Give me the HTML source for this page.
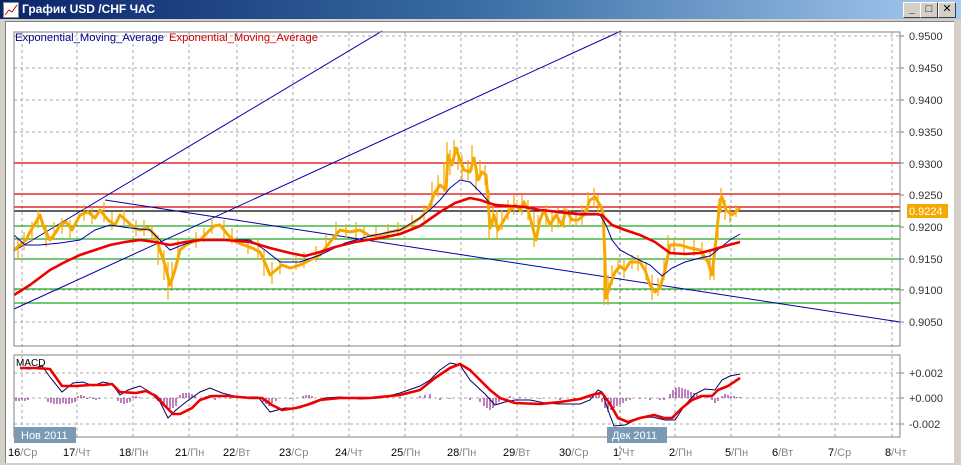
<!DOCTYPE html>
<html><head><meta charset="utf-8"><style>
html,body{margin:0;padding:0;width:961px;height:465px;overflow:hidden;background:#d4d0c8;font-family:"Liberation Sans","DejaVu Sans",sans-serif}
.title{position:absolute;left:0;top:0;width:961px;height:19px;background:linear-gradient(90deg,#0a246a 0%,#3a6ea5 50%,#a6caf0 100%);}
.title span{position:absolute;left:22px;top:2px;color:#fff;font-weight:bold;font-size:12px;font-family:"Liberation Sans","DejaVu Sans",sans-serif}
.ico{position:absolute;left:3px;top:2px;width:14px;height:14px;background:#fff;border:1px solid #888}
.btn{position:absolute;top:2px;width:16px;height:14px;background:#d4d0c8;border:1px solid;border-color:#fff #404040 #404040 #fff;font-size:11px;line-height:13px;text-align:center;font-weight:bold}
.body{position:absolute;left:5px;top:21px;width:948px;height:441px;background:#fff;border-left:1px solid #808080;border-top:1px solid #808080}
svg{position:absolute;left:0;top:0}
</style></head><body>
<div class="title"><div class="ico"><svg width="14" height="14"><polyline points="1,12 5,7 8,9 13,2" fill="none" stroke="#c00" stroke-width="1"/></svg></div><span>График USD /CHF ЧАС</span></div>
<div class="btn" style="left:903px">_</div><div class="btn" style="left:920px">□</div><div class="btn" style="left:938px">✕</div>
<div class="body"></div>
<svg width="961" height="465" font-family="Liberation Sans, DejaVu Sans, sans-serif">
<g stroke="#aaa" stroke-dasharray="3,3" stroke-width="1">
<line x1="22" y1="32" x2="22" y2="437"/><line x1="77" y1="32" x2="77" y2="437"/><line x1="133" y1="32" x2="133" y2="437"/><line x1="189" y1="32" x2="189" y2="437"/><line x1="237" y1="32" x2="237" y2="437"/><line x1="293" y1="32" x2="293" y2="437"/><line x1="349" y1="32" x2="349" y2="437"/><line x1="405" y1="32" x2="405" y2="437"/><line x1="461" y1="32" x2="461" y2="437"/><line x1="517" y1="32" x2="517" y2="437"/><line x1="573" y1="32" x2="573" y2="437"/><line x1="675" y1="32" x2="675" y2="437"/><line x1="731" y1="32" x2="731" y2="437"/><line x1="779" y1="32" x2="779" y2="437"/><line x1="835" y1="32" x2="835" y2="437"/><line x1="892" y1="32" x2="892" y2="437"/>
<line x1="14" y1="36" x2="900" y2="36"/><line x1="14" y1="68" x2="900" y2="68"/><line x1="14" y1="100" x2="900" y2="100"/><line x1="14" y1="132" x2="900" y2="132"/><line x1="14" y1="290" x2="900" y2="290"/><line x1="14" y1="322" x2="900" y2="322"/>
<line x1="14" y1="373" x2="900" y2="373"/><line x1="14" y1="398" x2="900" y2="398"/><line x1="14" y1="424" x2="900" y2="424"/>
</g>
<line x1="620" y1="32" x2="620" y2="460" stroke="#777" stroke-dasharray="3,3"/>
<g stroke-width="1.2">
<line x1="14" y1="163" x2="900" y2="163" stroke="#d00"/><line x1="14" y1="194" x2="900" y2="194" stroke="#d00"/><line x1="14" y1="207" x2="900" y2="207" stroke="#d00"/>
<line x1="14" y1="211" x2="900" y2="211" stroke="#000"/>
<line x1="14" y1="226" x2="900" y2="226" stroke="#2a2"/><line x1="14" y1="239" x2="900" y2="239" stroke="#2a2"/><line x1="14" y1="259" x2="900" y2="259" stroke="#2a2"/><line x1="14" y1="289" x2="900" y2="289" stroke="#2a2"/><line x1="14" y1="303" x2="900" y2="303" stroke="#2a2"/>
</g>
<g stroke="#00a" stroke-width="1"><line x1="14" y1="251" x2="382" y2="31"/><line x1="14" y1="309" x2="621" y2="31"/><line x1="105" y1="200" x2="900" y2="322"/></g>
<polyline fill="none" stroke="#f5a800" stroke-width="3" stroke-linejoin="round" points="14,250 20,245 26,240 30,232 36,222 40,215 44,228 50,240 56,232 60,225 66,222 72,230 80,215 88,212 95,218 100,210 108,220 115,225 120,215 128,222 134,228 140,230 148,228 155,235 160,250 165,265 170,285 175,270 180,250 186,245 192,242 200,240 208,232 214,226 220,225 228,235 236,242 244,245 252,248 260,252 266,265 270,275 276,270 282,265 290,268 300,265 310,260 320,255 330,242 340,230 350,232 360,230 370,236 380,235 390,232 400,230 410,225 420,218 426,212 430,205 435,192 440,185 446,190 448,155 452,165 456,148 460,160 464,170 470,172 474,158 478,180 482,172 486,175 488,200 490,228 494,215 498,230 504,220 510,210 516,205 520,210 524,202 528,210 532,225 536,240 540,220 544,210 550,225 556,215 562,225 566,210 572,220 578,220 584,215 590,200 595,197 600,205 603,212 605,260 606,298 610,285 615,272 620,266 625,270 630,262 640,262 645,270 650,285 655,292 660,288 665,270 670,245 680,245 690,248 700,250 708,262 712,275 716,240 720,200 722,197 726,210 732,215 740,208"/>
<path fill="none" stroke="#f5a800" stroke-width="1.2" d="M18 238v22M24 232v18M32 222v20M38 210v18M46 225v22M54 222v18M62 218v16M70 220v18M84 205v16M92 208v16M104 202v20M112 212v18M124 210v18M136 220v16M144 220v16M152 225v18M158 235v30M164 250v30M168 262v38M172 262v26M178 240v20M196 232v16M204 228v14M212 218v16M224 220v18M232 228v16M248 238v16M258 240v20M264 250v26M272 262v22M280 258v16M296 256v14M304 252v16M316 246v16M326 235v14M336 222v16M346 224v14M356 222v16M364 226v14M376 226v16M388 224v14M398 222v14M412 215v16M424 205v16M432 182v26M438 175v22M444 162v30M447 142v28M450 150v25M454 140v20M458 148v22M462 155v25M468 160v20M472 145v25M476 165v25M480 160v20M485 165v20M489 190v50M493 205v20M497 210v30M502 210v20M508 200v20M514 195v20M522 195v20M528 200v20M534 212v35M538 215v20M546 205v20M552 212v20M558 208v20M564 208v20M570 210v16M576 212v14M582 205v20M588 192v20M594 188v20M598 195v20M604 215v90M608 275v30M612 265v20M618 258v16M624 260v18M632 255v14M638 255v16M646 262v18M652 275v25M658 278v18M664 260v20M668 235v25M674 238v16M684 238v16M694 240v16M702 242v18M710 250v30M714 250v30M718 205v35M721 188v25M725 200v20M730 205v18M736 205v12"/>
<polyline fill="none" stroke="#00a" stroke-width="1" points="14,235 25,245 40,245 60,243 80,240 95,230 110,225 130,228 150,230 160,240 170,250 185,244 200,240 225,240 250,240 265,250 280,262 300,262 320,255 345,243 370,236 400,230 420,218 432,208 440,200 450,188 460,180 470,182 480,192 490,203 500,205 520,207 540,210 560,213 580,215 600,215 606,225 612,240 620,250 635,258 650,265 662,276 672,268 685,262 700,258 710,256 720,248 730,240 740,234"/>
<polyline fill="none" stroke="#e00" stroke-width="2.6" stroke-linejoin="round" points="14,295 30,285 50,270 65,262 80,255 95,250 110,245 125,242 140,240 155,242 170,245 185,242 200,240 225,240 250,242 270,248 290,253 305,256 320,252 335,247 355,242 380,238 400,234 420,226 440,212 455,203 470,198 480,200 495,205 510,206 525,207 540,210 560,212 580,214 595,214 602,215 612,225 625,230 640,235 655,242 670,253 685,254 700,253 712,250 725,246 740,242"/>
<rect x="14" y="32" width="886" height="314" fill="none" stroke="#808080"/>
<rect x="14" y="355" width="886" height="82" fill="none" stroke="#808080"/>
<text x="15" y="41" font-size="11" fill="#00008b" textLength="149" lengthAdjust="spacingAndGlyphs">Exponential_Moving_Average</text>
<text x="169" y="41" font-size="11" fill="#c00" textLength="149" lengthAdjust="spacingAndGlyphs">Exponential_Moving_Average</text>
<g stroke="#808080"><line x1="900" y1="36" x2="904" y2="36"/><line x1="900" y1="68" x2="904" y2="68"/><line x1="900" y1="100" x2="904" y2="100"/><line x1="900" y1="132" x2="904" y2="132"/><line x1="900" y1="163" x2="904" y2="163"/><line x1="900" y1="195" x2="904" y2="195"/><line x1="900" y1="227" x2="904" y2="227"/><line x1="900" y1="259" x2="904" y2="259"/><line x1="900" y1="290" x2="904" y2="290"/><line x1="900" y1="322" x2="904" y2="322"/><line x1="900" y1="373" x2="904" y2="373"/><line x1="900" y1="398" x2="904" y2="398"/><line x1="900" y1="424" x2="904" y2="424"/></g>
<g font-size="11" fill="#333">
<text x="909" y="40">0.9500</text><text x="909" y="72">0.9450</text><text x="909" y="104">0.9400</text><text x="909" y="136">0.9350</text><text x="909" y="168">0.9300</text><text x="909" y="199">0.9250</text><text x="909" y="231">0.9200</text><text x="909" y="263">0.9150</text><text x="909" y="294">0.9100</text><text x="909" y="326">0.9050</text>
<text x="909" y="377">+0.002</text><text x="909" y="402">+0.000</text><text x="909" y="428">-0.002</text>
</g>
<rect x="907" y="204" width="41" height="14" fill="#f5a800"/><text x="909" y="215" font-size="11" fill="#fff">0.9224</text>
<g stroke="#800080" stroke-width="1">
<path d="M16 398v3M19 398v3M22 398v2M25 398v3M28 398v2M48 398v4M51 398v5M54 398v6M57 398v6M60 398v6M63 398v5M66 398v6M69 398v6M72 398v5M75 398v4M78 398v-2M81 398v-3M84 398v-2M87 398v1M90 398v-1M93 398v1M96 398v2M99 398v1M118 398v3M121 398v5M124 398v6M127 398v5M130 398v4M133 398v-2M136 398v-2M139 398v-1M158 398v3M161 398v6M164 398v8M167 398v10M170 398v11M173 398v10M176 398v8M180 398v-3M183 398v-5M186 398v-5M189 398v-5M192 398v-4M195 398v-3M206 398v-2M209 398v-3M215 398v2M230 398v1M245 398v-2M260 398v2M263 398v4M266 398v6M269 398v8M272 398v5M276 398v3M290 398v1M303 398v-2M306 398v-3M309 398v-3M312 398v-2M340 398v1M370 398v1M400 398v-1M420 398v-2M425 398v-3M430 398v-4M440 398v2M450 398v1M470 398v2M480 398v4M484 398v8M487 398v10M490 398v12M493 398v10M496 398v6M499 398v4M510 398v-2M520 398v-1M540 398v1M560 398v2M575 398v1M590 398v-3M593 398v-4M596 398v-5M599 398v-6M602 398v4M605 398v10M608 398v14M611 398v12M614 398v10M617 398v8M620 398v6M623 398v5M626 398v3M630 398v2M640 398v1M650 398v2M660 398v2M664 398v2M670 398v-4M673 398v-8M676 398v-10M679 398v-11M682 398v-10M685 398v-9M688 398v-8M691 398v-6M694 398v-5M697 398v-4M700 398v-3M708 398v-2M712 398v2M715 398v5M718 398v3M722 398v-2M725 398v-4M728 398v-3M731 398v-2M734 398v-2M737 398v-1M740 398v-1"/>
</g>
<polyline fill="none" stroke="#00005a" stroke-width="1" points="20,368 30,369 42,366 50,377 62,392 73,383 83,382 93,386 103,382 112,384 120,395 128,390 140,386 150,392 160,402 168,418 176,410 186,402 200,392 210,388 222,393 238,397 258,397 270,412 285,408 300,408 310,403 318,400 325,398 340,397 360,399 380,398 400,393 420,386 430,380 440,370 450,363 460,365 470,380 485,394 495,405 505,402 515,400 530,400 545,403 560,404 580,404 590,400 598,390 602,392 608,410 614,426 625,425 640,418 652,417 665,420 675,420 685,405 695,394 705,389 715,390 722,380 730,376 740,374"/>
<polyline fill="none" stroke="#e00" stroke-width="2.6" stroke-linejoin="round" points="20,368 34,368 50,369 62,386 76,386 90,385 104,385 112,384 120,392 136,393 146,391 156,396 164,405 173,414 180,414 192,408 200,400 212,396 228,396 250,398 262,398 272,405 282,410 296,408 310,404 320,400 340,398 370,398 400,395 420,390 435,378 450,368 460,364 470,370 480,380 490,390 500,398 515,403 540,404 560,402 580,399 595,394 602,393 610,404 618,418 628,422 640,418 654,415 664,418 672,418 682,408 692,400 702,396 712,396 718,390 728,386 740,378"/>
<text x="16" y="366" font-size="10" fill="#000">MACD</text>
<rect x="14" y="427" width="62" height="16" fill="#7a9ab5"/><text x="21" y="439" font-size="11" fill="#fff">Нов 2011</text>
<rect x="607" y="427" width="60" height="16" fill="#7a9ab5"/><text x="612" y="439" font-size="11" fill="#fff">Дек 2011</text>
<g font-size="11" fill="#000">
<text x="8" y="456">16<tspan fill="#888">/Ср</tspan></text><text x="63" y="456">17<tspan fill="#888">/Чт</tspan></text><text x="119" y="456">18<tspan fill="#888">/Пн</tspan></text><text x="175" y="456">21<tspan fill="#888">/Пн</tspan></text><text x="223" y="456">22<tspan fill="#888">/Вт</tspan></text><text x="279" y="456">23<tspan fill="#888">/Ср</tspan></text><text x="335" y="456">24<tspan fill="#888">/Чт</tspan></text><text x="391" y="456">25<tspan fill="#888">/Пн</tspan></text><text x="447" y="456">28<tspan fill="#888">/Пн</tspan></text><text x="503" y="456">29<tspan fill="#888">/Вт</tspan></text><text x="559" y="456">30<tspan fill="#888">/Ср</tspan></text><text x="613" y="456">1<tspan fill="#888">/Чт</tspan></text><text x="669" y="456">2<tspan fill="#888">/Пн</tspan></text><text x="725" y="456">5<tspan fill="#888">/Пн</tspan></text><text x="772" y="456">6<tspan fill="#888">/Вт</tspan></text><text x="828" y="456">7<tspan fill="#888">/Ср</tspan></text><text x="885" y="456">8<tspan fill="#888">/Чт</tspan></text>
</g>
</svg>
</body></html>
